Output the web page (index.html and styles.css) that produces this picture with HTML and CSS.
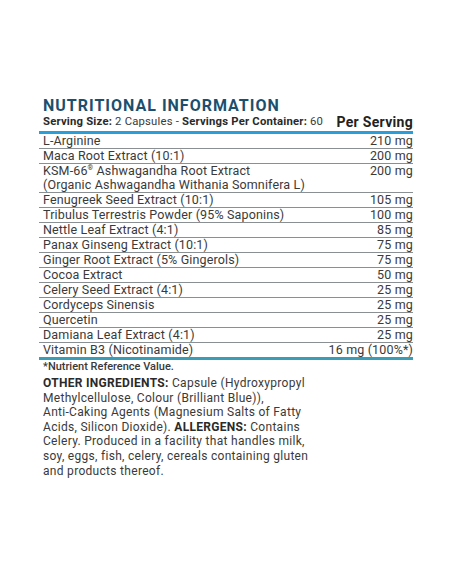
FILE: index.html
```html
<!DOCTYPE html>
<html lang="en">
<head>
    <meta charset="UTF-8">
    <meta name="viewport" content="width=device-width, initial-scale=1.0">
    <title>Nutritional Information</title>
    <link rel="stylesheet" href="styles.css">
</head>
<body>
    <div class="panel">
        <h1>NUTRITIONAL INFORMATION</h1>
        <div class="head">
            <span><b>Serving Size:</b> 2 Capsules - <b>Servings Per Container:</b> 60</span>
            <span class="per">Per Serving</span>
        </div>
        <table class="facts">
            <tr><td>L-Arginine</td><td>210 mg</td></tr>
            <tr><td>Maca Root Extract (10:1)</td><td>200 mg</td></tr>
            <tr><td>KSM-66<sup>®</sup> Ashwagandha Root Extract<br>(Organic Ashwagandha Withania Somnifera L)</td><td class="top">200 mg</td></tr>
            <tr><td>Fenugreek Seed Extract (10:1)</td><td>105 mg</td></tr>
            <tr><td>Tribulus Terrestris Powder (95% Saponins)</td><td>100 mg</td></tr>
            <tr><td>Nettle Leaf Extract (4:1)</td><td>85 mg</td></tr>
            <tr><td>Panax Ginseng Extract (10:1)</td><td>75 mg</td></tr>
            <tr><td>Ginger Root Extract (5% Gingerols)</td><td>75 mg</td></tr>
            <tr><td>Cocoa Extract</td><td>50 mg</td></tr>
            <tr><td>Celery Seed Extract (4:1)</td><td>25 mg</td></tr>
            <tr><td>Cordyceps Sinensis</td><td>25 mg</td></tr>
            <tr><td>Quercetin</td><td>25 mg</td></tr>
            <tr><td>Damiana Leaf Extract (4:1)</td><td>25 mg</td></tr>
            <tr><td>Vitamin B3 (Nicotinamide)</td><td>16 mg (100%*)</td></tr>
        </table>
        <p class="note">*Nutrient Reference Value.</p>
        <p class="other"><b>OTHER INGREDIENTS:</b> Capsule (Hydroxypropyl Methylcellulose, Colour (Brilliant Blue)), Anti&#8209;Caking Agents (Magnesium Salts of Fatty Acids, Silicon Dioxide). <b>ALLERGENS:</b> Contains Celery. Produced in a facility that handles milk, soy, eggs, fish, celery, cereals containing gluten and products thereof.</p>
    </div>
</body>
</html>
```

FILE: styles.css
```css
body {
    margin: 0;
    background-color: #fff;
    font-family: Roboto, "Liberation Sans", sans-serif;
    color: #3a3a3a;
}

.panel {
    width: 374px;
    margin: 0 0 0 39px;
    padding-top: 96px;
}

h1 {
    margin: 0 0 0 4px;
    font-size: 16px;
    font-weight: 700;
    letter-spacing: 1px;
    color: #1c4f6e;
    line-height: 19px;
}

.head {
    display: flex;
    justify-content: space-between;
    align-items: flex-end;
    padding: 0 0 2px 4px;
    font-size: 11.3px;
    letter-spacing: 0.2px;
    line-height: 14px;
    border-bottom: 3px solid #2a9ed8;
}

.head b {
    font-weight: 700;
    color: #2a2a2a;
}

.head .per {
    font-size: 14px;
    font-weight: 700;
    letter-spacing: 0.3px;
    color: #222;
}

.facts {
    width: 100%;
    border-collapse: collapse;
    font-size: 12.5px;
    letter-spacing: 0.15px;
    line-height: 14px;
    border-bottom: 3px solid #3a9db5;
}

.facts td {
    padding: 0 0 0 4px;
    border-bottom: 1px solid #8a8f94;
    vertical-align: bottom;
    white-space: nowrap;
}

.facts td:last-child {
    text-align: right;
    padding: 0;
}

.facts td.top {
    vertical-align: top;
}

.facts tr:last-child td {
    border-bottom: none;
}

.facts sup {
    font-size: 7px;
    line-height: 0;
}

.note {
    margin: 0 0 0 4px;
    font-size: 11px;
    font-weight: 500;
    line-height: 14px;
}

.other {
    margin: 2px 0 0 4px;
    width: 272px;
    font-size: 12px;
    letter-spacing: 0.3px;
    line-height: 14.6px;
}

.other b {
    color: #2a2a2a;
}
```
